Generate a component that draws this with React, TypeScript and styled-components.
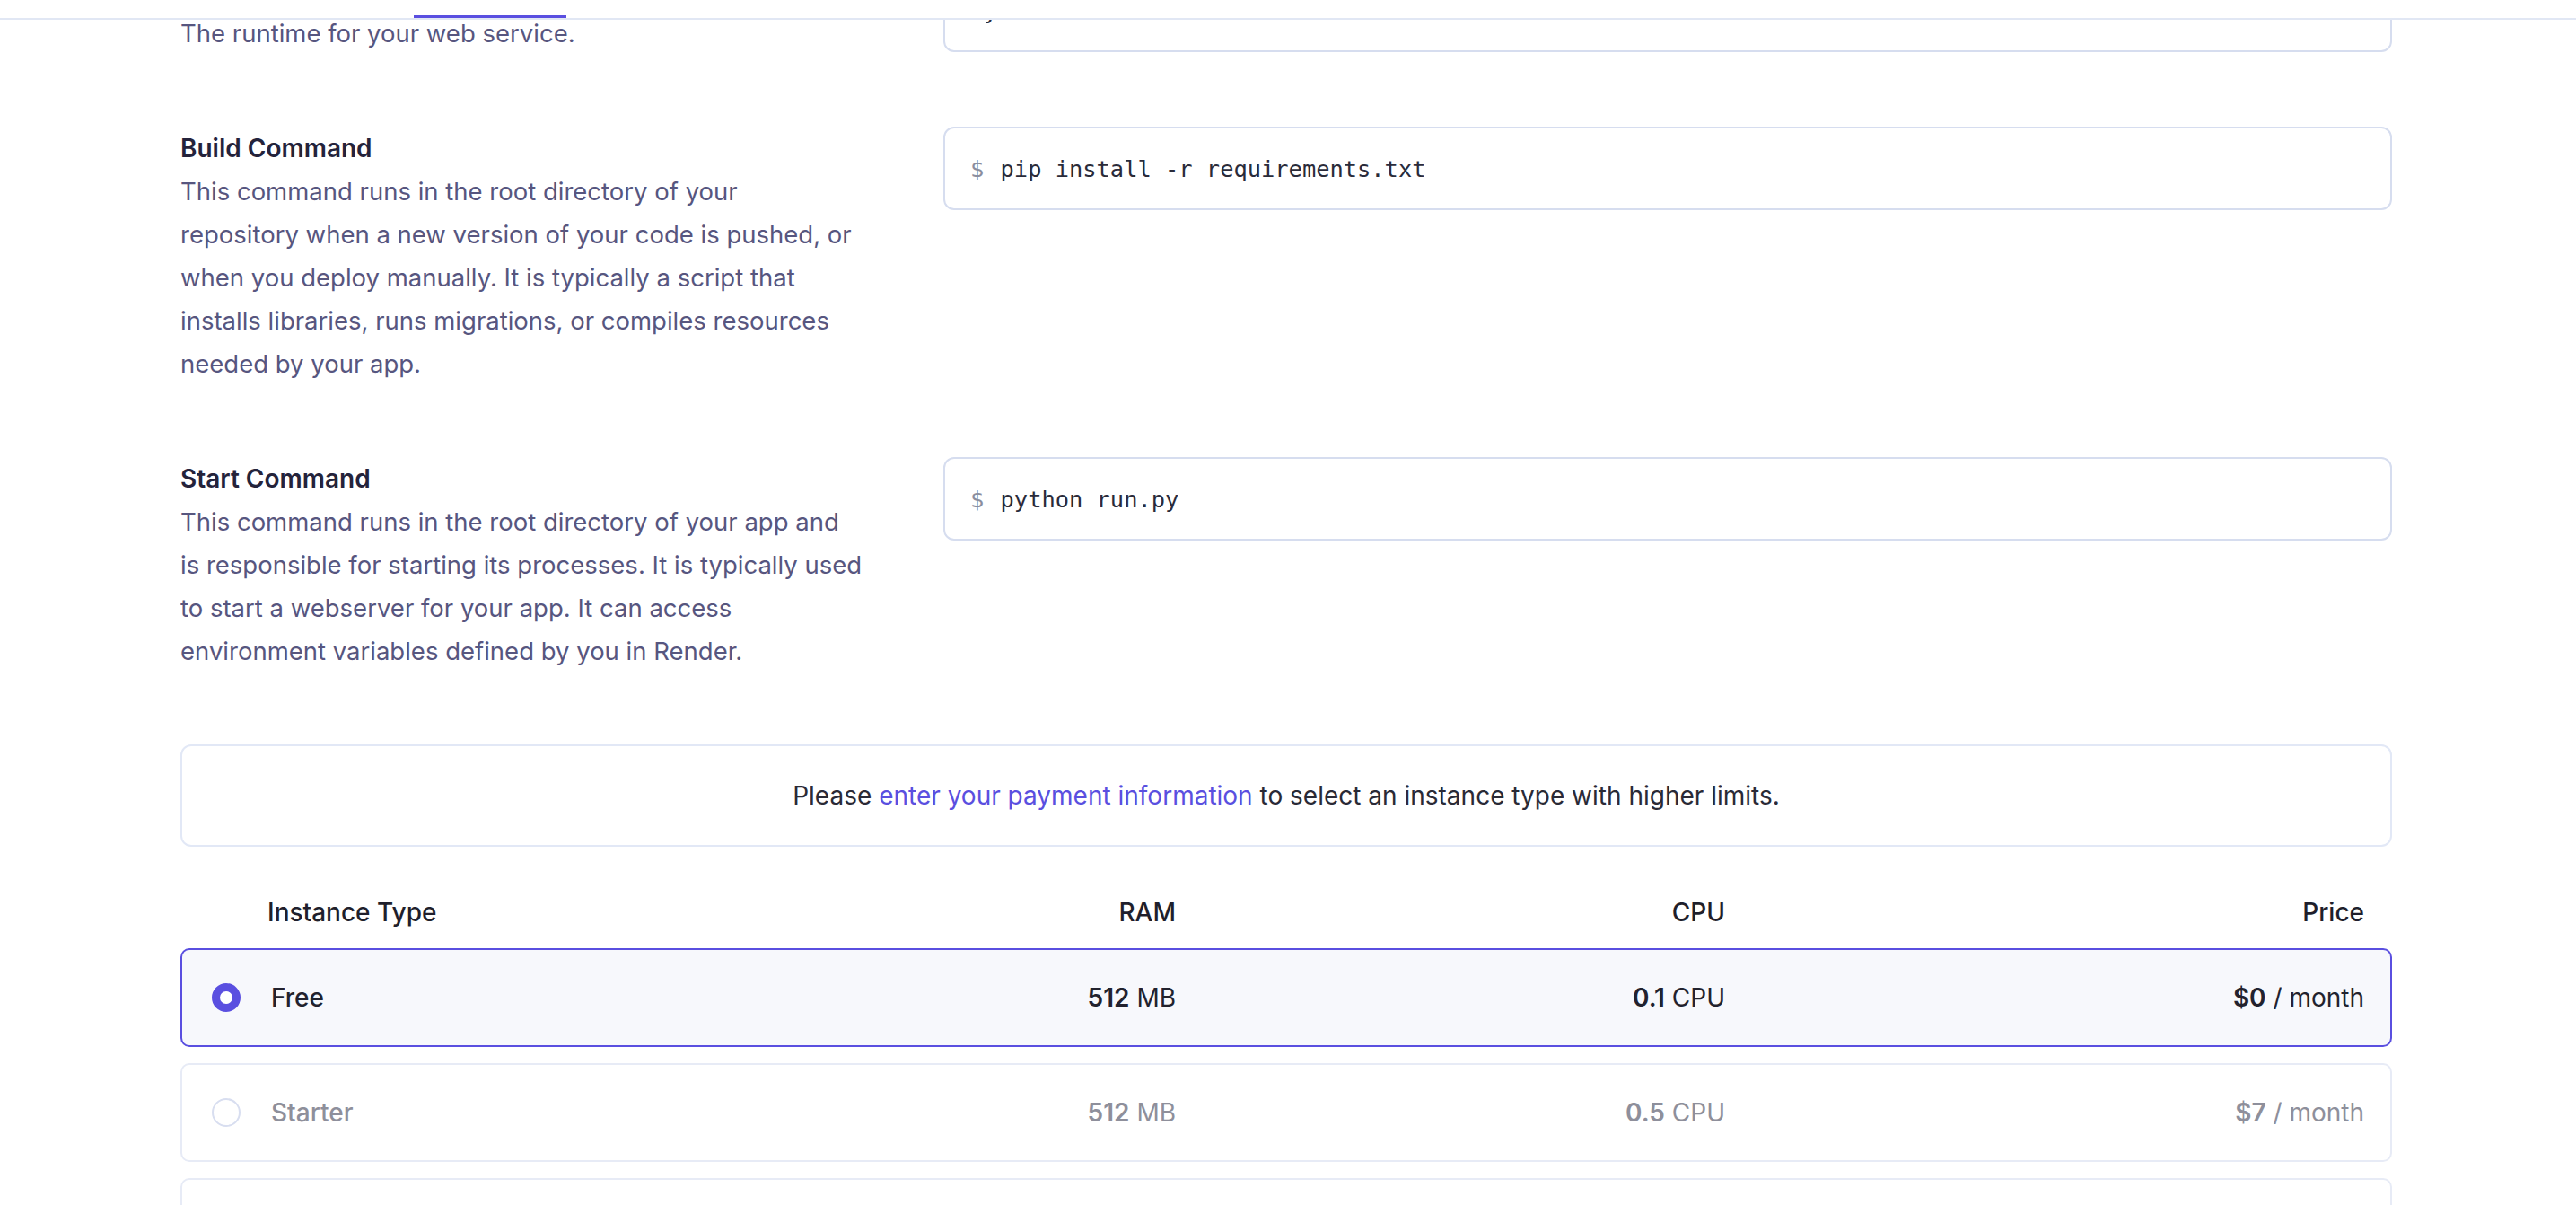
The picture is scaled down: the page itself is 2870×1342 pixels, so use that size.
import React from "react";
import styled, { createGlobalStyle } from "styled-components";

const GlobalStyle = createGlobalStyle`
  html, body {
    margin: 0;
    padding: 0;
    background: #ffffff;
    overflow: hidden;
  }
  body {
    font-family: Inter, "Noto Sans", "Liberation Sans", sans-serif;
    color: #23223a;
    -webkit-font-smoothing: antialiased;
  }
  * { box-sizing: border-box; }
`;

const Page = styled.div`
  width: 2870px;
  height: 1342px;
  overflow: hidden;
  position: relative;
  background: #fff;
`;

const TopBar = styled.div`
  position: relative;
  z-index: 2;
  height: 22px;
  background: #fff;
  border-bottom: 2px solid #e1e7f4;
  display: flex;
`;

const ActiveTab = styled.div`
  margin-left: 461px;
  width: 170px;
  height: 20px;
  border-bottom: 3px solid #5a4fe0;
`;

const Content = styled.div`
  position: relative;
  z-index: 1;
  margin-top: -57px;
  padding: 0 205px 0 201px;
  display: flex;
  flex-direction: column;
  gap: 80px;
`;

const Section = styled.section`
  display: grid;
  grid-template-columns: 780px 1fr;
  column-gap: 70px;
  align-items: start;
`;

const Label = styled.div`
  display: flex;
  flex-direction: column;
`;

const Title = styled.h3`
  margin: 0;
  font-size: 28px;
  line-height: 48px;
  font-weight: 600;
  color: #24233b;
`;

const Description = styled.p`
  margin: 0;
  font-size: 27.5px;
  line-height: 48px;
  font-weight: 400;
  color: #57567f;
`;

const Line = styled.span`
  display: block;
  white-space: nowrap;
`;

const CodeBox = styled.div`
  height: 93px;
  border: 2px solid #d6ddef;
  border-radius: 12px;
  padding: 0 28px;
  display: flex;
  align-items: center;
  font-family: "DejaVu Sans Mono", "Liberation Mono", monospace;
  font-size: 25.4px;
  color: #2a2b3a;
  white-space: pre;
  background: #fff;
`;

const Prompt = styled.span`
  color: #8b8e9e;
  margin-right: 3px;
`;

const Notice = styled.div`
  height: 114px;
  border: 2px solid #e2e8f6;
  border-radius: 12px;
  display: flex;
  align-items: center;
  justify-content: center;
  font-size: 28px;
  color: #2a2a36;
`;

const Link = styled.a`
  color: #5a4fe0;
  text-decoration: none;
`;

const Table = styled.div`
  display: flex;
  flex-direction: column;
  gap: 18px;
  margin-top: -31px;
`;

const Columns = styled.div`
  display: grid;
  grid-template-columns: 66px 1fr 300px 612px 712px;
  align-items: center;
  font-size: 28px;
`;

const HeaderRow = styled(Columns)`
  height: 48px;
  padding: 0 31px 0 31px;
  font-weight: 500;
  color: #1f1f2c;
  margin-bottom: -2px;
`;

const Row = styled(Columns)<{ $selected?: boolean; $disabled?: boolean }>`
  height: 110px;
  padding: 0 29px 0 33px;
  border: 2px solid ${(p) => (p.$selected ? "#5a4fe0" : "#e7ebf6")};
  border-radius: 10px;
  background: ${(p) => (p.$selected ? "#f7f8fc" : "#fff")};
  color: ${(p) => (p.$disabled ? "#8e8f9b" : "#22222e")};
`;

const Cell = styled.div<{ $right?: boolean }>`
  text-align: ${(p) => (p.$right ? "right" : "left")};
  white-space: nowrap;
`;

const Name = styled(Cell)`
  font-weight: 500;
`;

const Strong = styled.span`
  font-weight: 600;
`;

const Radio = styled.span<{ $checked?: boolean }>`
  display: block;
  width: 32px;
  height: 32px;
  border-radius: 50%;
  border: ${(p) => (p.$checked ? "9px solid #5a4fe0" : "2px solid #d8def0")};
  background: #fff;
`;

type Plan = {
  name: string;
  ram: string;
  ramUnit: string;
  cpu: string;
  price: string;
  selected?: boolean;
  disabled?: boolean;
};

const plans: Plan[] = [
  { name: "Free", ram: "512", ramUnit: "MB", cpu: "0.1", price: "$0", selected: true },
  { name: "Starter", ram: "512", ramUnit: "MB", cpu: "0.5", price: "$7", disabled: true },
  { name: "Standard", ram: "2", ramUnit: "GB", cpu: "1", price: "$25", disabled: true },
];

type Field = { title: string; lines: string[]; command?: string; value?: string };

const fields: Field[] = [
  { title: "Runtime", lines: ["The runtime for your web service."], value: "Python 3" },
  {
    title: "Build Command",
    lines: [
      "This command runs in the root directory of your",
      "repository when a new version of your code is pushed, or",
      "when you deploy manually. It is typically a script that",
      "installs libraries, runs migrations, or compiles resources",
      "needed by your app.",
    ],
    command: "pip install -r requirements.txt",
  },
  {
    title: "Start Command",
    lines: [
      "This command runs in the root directory of your app and",
      "is responsible for starting its processes. It is typically used",
      "to start a webserver for your app. It can access",
      "environment variables defined by you in Render.",
    ],
    command: "python run.py",
  },
];

export default function App() {
  return (
    <Page>
      <GlobalStyle />
      <TopBar>
        <ActiveTab />
      </TopBar>
      <Content>
        {fields.map((f) => (
          <Section key={f.title}>
            <Label>
              <Title>{f.title}</Title>
              <Description>
                {f.lines.map((l) => (
                  <Line key={l}>{l}</Line>
                ))}
              </Description>
            </Label>
            <CodeBox>
              {f.command ? (
                <>
                  <Prompt>$ </Prompt>
                  {f.command}
                </>
              ) : (
                f.value
              )}
            </CodeBox>
          </Section>
        ))}
        <Notice>
          <span>
            Please <Link href="#">enter your payment information</Link> to select an instance type
            with higher limits.
          </span>
        </Notice>
        <Table>
          <HeaderRow>
            <Cell />
            <Cell>Instance Type</Cell>
            <Cell $right>RAM</Cell>
            <Cell $right>CPU</Cell>
            <Cell $right>Price</Cell>
          </HeaderRow>
          {plans.map((p) => (
            <Row key={p.name} $selected={p.selected} $disabled={p.disabled}>
              <Radio $checked={p.selected} />
              <Name>{p.name}</Name>
              <Cell $right>
                <Strong>{p.ram}</Strong> {p.ramUnit}
              </Cell>
              <Cell $right>
                <Strong>{p.cpu}</Strong> CPU
              </Cell>
              <Cell $right>
                <Strong>{p.price}</Strong> / month
              </Cell>
            </Row>
          ))}
        </Table>
      </Content>
    </Page>
  );
}
